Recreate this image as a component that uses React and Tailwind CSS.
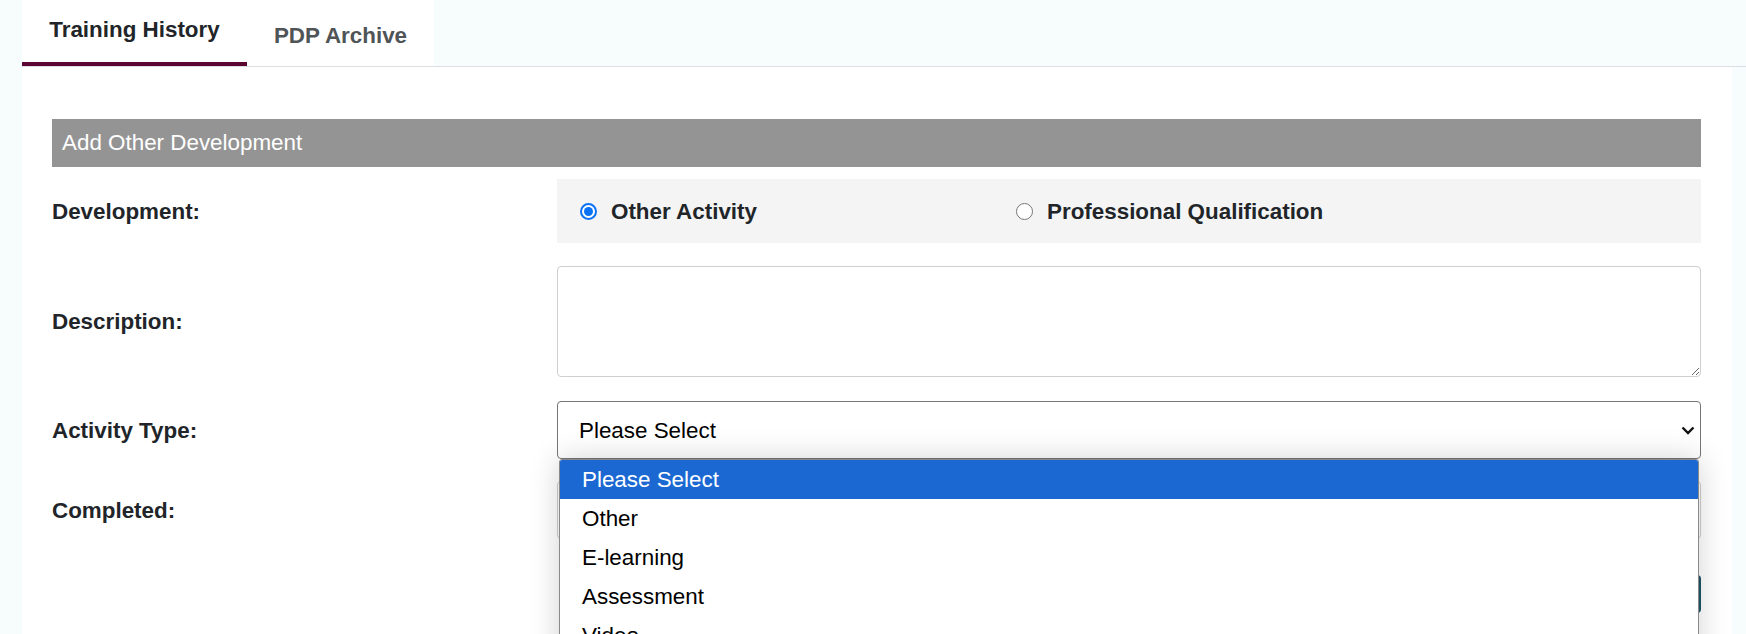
import { useState } from 'react';

const activityTypes = ['Please Select', 'Other', 'E-learning', 'Assessment', 'Video', 'Workshop', 'Conference'];

function Radio({ checked, label, className = '' }) {
  return (
    <label className={`flex items-center gap-[14px] ${className}`}>
      {checked ? (
        <span className="flex h-[17px] w-[17px] items-center justify-center rounded-full border-2 border-[#0b72f5] bg-white">
          <span className="h-[9px] w-[9px] rounded-full bg-[#0b72f5]" />
        </span>
      ) : (
        <span className="h-[17px] w-[17px] rounded-full border border-[#767676] bg-white" />
      )}
      <span className="text-[22.4px] font-bold leading-[25px] text-[#212529]">{label}</span>
    </label>
  );
}

export default function App() {
  const [development] = useState('other');

  return (
    <div className="h-[634px] overflow-hidden bg-[#f7fcfd] font-['Liberation_Sans',Arial,sans-serif] text-[#212529]">
      {/* Tabs */}
      <div className="ml-[22px] flex border-b border-[#dcdee2]">
        <div className="h-[66px] w-[225px] border-b-4 border-[#5b0633] bg-white pt-[17px] text-center text-[22.4px] font-bold leading-[25px] text-[#212529]">
          Training History
        </div>
        <div className="h-[66px] w-[187px] bg-white pt-[23px] text-center text-[22.4px] font-bold leading-[25px] text-[#4f5457]">
          PDP Archive
        </div>
      </div>

      {/* Panel */}
      <div className="ml-[22px] mr-[14px] h-full bg-white pl-[30px] pr-[31px] pt-[52px]">
        <div className="flex h-[48px] items-center bg-[#949494] pl-[10px] text-[22.4px] leading-[25px] text-white">
          <span className="-mt-[2px]">Add Other Development</span>
        </div>

        {/* Development */}
        <div className="mt-[12px] flex items-center">
          <div className="w-[505px] shrink-0 text-[22.4px] font-bold leading-[25px]">Development:</div>
          <div className="flex h-[64px] flex-1 items-center bg-[#f4f4f4] pl-[23px]">
            <Radio checked={development === 'other'} label="Other Activity" className="w-[436px]" />
            <Radio checked={development === 'qualification'} label="Professional Qualification" />
          </div>
        </div>

        {/* Description */}
        <div className="mt-[23px] flex items-center">
          <div className="w-[505px] shrink-0 text-[22.4px] font-bold leading-[25px]">Description:</div>
          <textarea className="h-[111px] flex-1 rounded-[4px] border border-[#cfcfcf] bg-white" />
        </div>

        {/* Activity Type */}
        <div className="mt-[24px] flex items-center">
          <div className="w-[505px] shrink-0 text-[22.4px] font-bold leading-[25px]">Activity Type:</div>
          <div className="relative flex h-[58px] flex-1 items-center justify-between rounded-[4px] border border-[#767676] bg-white pl-[21px] pr-[5px]">
            <span className="text-[22.4px] leading-[25px] text-black">Please Select</span>
            <svg width="14" height="9" viewBox="0 0 14 9" fill="none">
              <path d="M1.5 1.5L7 7L12.5 1.5" stroke="#111" strokeWidth="2.4" />
            </svg>

            {/* Open dropdown list */}
            <div className="absolute left-[1px] right-[1px] top-[calc(100%+1px)] z-10 overflow-hidden rounded-t-[3px] border border-[#8a8a8a] bg-white shadow-[0_0_30px_rgba(0,0,0,0.18)]">
              {activityTypes.map((opt, i) => (
                <div
                  key={opt}
                  className={`flex h-[39px] items-center pl-[22px] text-[22.4px] leading-[25px] ${
                    i === 0 ? 'bg-[#1b68d3] text-white' : 'text-black'
                  }`}
                >
                  {opt}
                </div>
              ))}
            </div>
          </div>
        </div>

        {/* Completed */}
        <div className="mt-[22px] flex items-center">
          <div className="w-[505px] shrink-0 text-[22.4px] font-bold leading-[25px]">Completed:</div>
          <input type="text" className="h-[58px] flex-1 rounded-[4px] border border-[#cfcfcf] bg-white" />
        </div>

        <div className="mt-[36px] flex justify-end">
          <button className="h-[38px] rounded-[4px] bg-[#1d5566] px-[24px] text-[18px] text-white">Save</button>
        </div>
      </div>
    </div>
  );
}
